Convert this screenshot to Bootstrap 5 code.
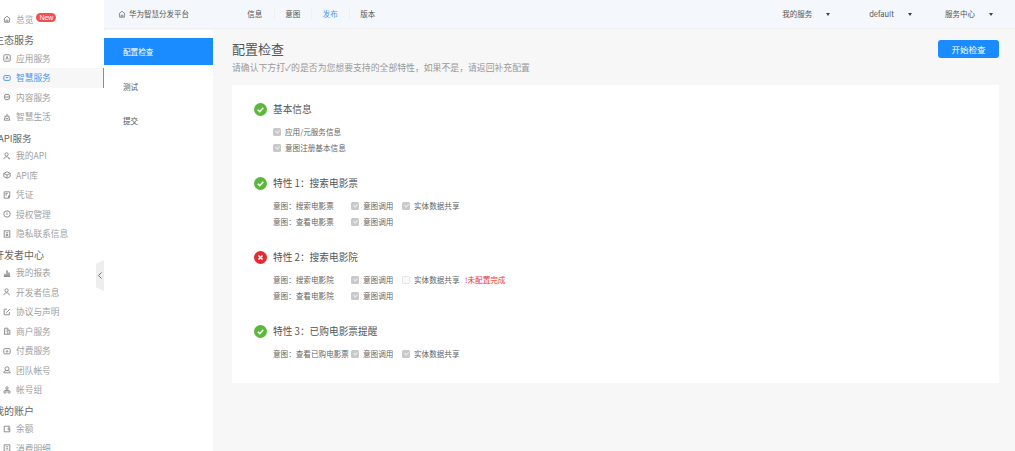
<!DOCTYPE html>
<html lang="zh">
<head>
<meta charset="utf-8">
<title>配置检查</title>
<link href="https://cdn.jsdelivr.net/npm/bootstrap@5.3.0/dist/css/bootstrap.min.css" rel="stylesheet">
<style>
html,body{height:451px;overflow:hidden;}
body{font-family:"Noto Sans CJK SC","Liberation Sans",sans-serif;background:#f7f7f7;color:#555;}
.shell{height:451px;}
.side{width:104px;height:451px;background:#fff;flex:none;padding-top:9.5px;overflow:hidden;position:relative;z-index:1;}
.side-row{height:19.5px;line-height:19.5px;font-size:8.7px;color:#a0a0a0;display:flex;align-items:center;padding-left:3px;white-space:nowrap;}
.side-row svg{width:8px;height:8px;flex:none;margin-right:5px;stroke:#8c8c8c;fill:none;stroke-width:1.2;}
.side-row.on{background:#f7f7f7;color:#4a9af0;border-right:1.5px solid #4a9af0;}
.side-row.on svg{stroke:#4a9af0;}
.side-title{height:19.5px;line-height:22px;font-size:10px;color:#666;white-space:nowrap;margin-left:-6px;}
.side-title.latin{font-size:9.5px;margin-left:-2px;}
.new-tag{background:#f0504f;color:#fff;font-size:7px;line-height:9px;padding:0 3px;border-radius:5px;margin-left:3px;margin-top:-3px;font-family:"Liberation Sans",sans-serif;}
.fold{position:absolute;left:96px;top:260px;width:8px;height:31px;background:#eeeeee;clip-path:polygon(0 12%,100% 0,100% 100%,0 88%);z-index:2;}
.fold svg{display:block;width:8px;height:31px;}
.main{min-width:0;}
.topper{height:29px;background:#f4f7fb;border-bottom:1px solid #f0f0f0;font-size:7.5px;color:#555;}
.brand{width:132px;padding-left:14px;flex:none;white-space:nowrap;}
.brand svg{width:8px;height:8px;margin-right:3px;stroke:#777;fill:none;stroke-width:1;}
.tab-link{width:37.5px;text-align:center;white-space:nowrap;}
.tab-link+.tab-link{border-left:1px solid #eef0f3;}
.tab-link.on{color:#4a9af0;}
.drop-set{padding-right:22px;}
.drop{white-space:nowrap;gap:14px;margin-left:39px;}
.drop.near{margin-left:33px;}
.caret-mark{width:0;height:0;border-left:2px solid transparent;border-right:2px solid transparent;border-top:3px solid #444;}
.steps{width:109px;flex:none;background:#fff;border-radius:3px 3px 0 0;margin:1px 0 0 0;padding-top:8px;height:421px;font-size:7.6px;color:#555;}
.step-item{height:34.5px;display:flex;align-items:center;padding-left:19px;}
.step-item.first{height:27px;margin-bottom:4px;background:#1a8cff;color:#fff;}
.panel{padding:11px 16px 0 19px;}
.page-h{font-size:13px;line-height:18px;color:#555;margin:0;font-weight:400;}
.page-sub{font-size:8.85px;line-height:12px;color:#999;margin:4px 0 0;white-space:nowrap;}
.start-btn{background:#1a8cff;color:#fff;font-size:8.5px;width:61px;height:18px;border:0;border-radius:3px;padding:0;line-height:18px;}
.check-box{background:#fff;margin-top:11px;height:298px;padding:15px 22px 0 22px;}
.feat-h{font-size:9.7px;line-height:18px;height:18px;color:#555;gap:6px;margin:0 0 6px;font-weight:400;}
.feat-h svg{width:13px;height:13px;flex:none;}
.f-list{padding-left:19px;font-size:7.6px;color:#666;}
.f-row{height:16px;white-space:nowrap;}
.f-label{width:78px;flex:none;}
.f-opt{width:51px;flex:none;gap:4px;}
.tick{width:8px;height:8px;border-radius:1.5px;background:#c9c9c9;flex:none;display:block;position:relative;}
.tick::after{content:"";position:absolute;left:2.6px;top:1.2px;width:2.8px;height:4.4px;border:solid #efefef;border-width:0 1px 1px 0;transform:rotate(45deg);}
.tick.off{background:#fafafa;border:1px solid #e4e4e4;}
.tick.off::after{display:none;}
.warn{color:#e8353b;margin-left:1px;}
.opt-wide{width:62px;}
.gap-a{height:18px;}
</style>
</head>
<body>
<div class="shell d-flex">
  <aside class="side">
    <div class="side-row"><svg viewBox="0 0 10 10"><path d="M1 5 5 1.5 9 5M2 4.5V9h6V4.5M4 9V6.5h2V9"/></svg>总览<span class="new-tag">New</span></div>
    <div class="side-title">生态服务</div>
    <div class="side-row"><svg viewBox="0 0 10 10"><rect x="1" y="1" width="8" height="8" rx="1"/><path d="M3.500 7 5 3l1.500 4"/></svg>应用服务</div>
    <div class="side-row on"><svg viewBox="0 0 10 10"><rect x="1" y="2" width="8" height="6" rx="1.500"/><path d="M3.500 4.500h3"/></svg>智慧服务</div>
    <div class="side-row"><svg viewBox="0 0 10 10"><circle cx="5" cy="5" r="3.500"/><path d="M2 5h6"/></svg>内容服务</div>
    <div class="side-row"><svg viewBox="0 0 10 10"><path d="M2 4h6M5 1v3M3 4 1.500 9h7L7 4M3.500 7h3"/></svg>智慧生活</div>
    <div class="side-title latin">API服务</div>
    <div class="side-row"><svg viewBox="0 0 10 10"><circle cx="4.500" cy="3" r="2"/><path d="M1 9c.5-2.500 2-3 3.500-3s3 .5 3.500 3M7 8h2"/></svg>我的API</div>
    <div class="side-row"><svg viewBox="0 0 10 10"><path d="M5 1 9 3v4L5 9 1 7V3z"/><path d="M1 3l4 2 4-2M5 5v4"/></svg>API库</div>
    <div class="side-row"><svg viewBox="0 0 10 10"><path d="M1.500 1h7v5H7v3H1.500zM3 3h3M3 5h2"/><circle cx="7.500" cy="7.500" r="1"/></svg>凭证</div>
    <div class="side-row"><svg viewBox="0 0 10 10"><circle cx="5" cy="5" r="4"/><path d="M5 3v3"/></svg>授权管理</div>
    <div class="side-row"><svg viewBox="0 0 10 10"><rect x="1.500" y="1" width="7" height="8"/><path d="M3.500 3.500h3M3.500 5.500h3M3.500 7h3"/></svg>隐私联系信息</div>
    <div class="side-title">开发者中心</div>
    <div class="side-row"><svg viewBox="0 0 10 10"><path d="M1 9h8M2.500 9V6M5 9V2M7.500 9V4.500" stroke-width="1.800"/></svg>我的报表</div>
    <div class="side-row"><svg viewBox="0 0 10 10"><circle cx="4.500" cy="3" r="2"/><path d="M1 9c.5-2.500 2-3 3.500-3s3 .5 3.500 3"/></svg>开发者信息</div>
    <div class="side-row"><svg viewBox="0 0 10 10"><path d="M8 5v3.500H1.500v-7H5M4 6l4.500-4.500"/></svg>协议与声明</div>
    <div class="side-row"><svg viewBox="0 0 10 10"><path d="M2 9V1.500h4V9M6 4h2.500v5M1 9h8M3.500 3.500h1M3.500 5.500h1"/></svg>商户服务</div>
    <div class="side-row"><svg viewBox="0 0 10 10"><rect x="1" y="2" width="8" height="6.500" rx="1"/><circle cx="5" cy="5.500" r="1"/></svg>付费服务</div>
    <div class="side-row"><svg viewBox="0 0 10 10"><circle cx="5" cy="3.500" r="2.500"/><path d="M1 8.500h8C9 6.500 7 5.500 5 5.500s-4 1-4 3z"/></svg>团队帐号</div>
    <div class="side-row"><svg viewBox="0 0 10 10"><circle cx="5" cy="2.500" r="1.500"/><circle cx="2.500" cy="7.500" r="1.500"/><circle cx="7.500" cy="7.500" r="1.500"/><path d="M5 4v1.500M2.500 6V5.500h5V6"/></svg>帐号组</div>
    <div class="side-title">我的账户</div>
    <div class="side-row"><svg viewBox="0 0 10 10"><path d="M8.500 2.500v-1H1.500v7h7v-5H6.500v2.500h2"/></svg>余额</div>
    <div class="side-row"><svg viewBox="0 0 10 10"><path d="M1.500 1h7v8h-7zM3.500 3.500h3M3.500 6h3"/></svg>消费明细</div>
  </aside>
  <div class="fold"><svg viewBox="0 0 8 31"><path d="M5.500 12.500 2.500 15.500l3 3" fill="none" stroke="#777" stroke-width="1"/></svg></div>
  <div class="main flex-grow-1 d-flex flex-column">
    <header class="topper d-flex align-items-center">
      <div class="brand d-flex align-items-center"><svg viewBox="0 0 10 10"><path d="M1 5 5 1.500 9 5M2 4.500V9h6V4.500M4 9V6.500h2V9"/></svg>华为智慧分发平台</div>
      <nav class="d-flex">
        <span class="tab-link">信息</span><span class="tab-link">意图</span><span class="tab-link on">发布</span><span class="tab-link">版本</span>
      </nav>
      <div class="drop-set d-flex ms-auto">
        <div class="drop d-flex align-items-center">我的服务<span class="caret-mark"></span></div>
        <div class="drop d-flex align-items-center">default<span class="caret-mark"></span></div>
        <div class="drop near d-flex align-items-center">服务中心<span class="caret-mark"></span></div>
      </div>
    </header>
    <div class="d-flex flex-grow-1">
      <div class="steps">
        <div class="step-item first">配置检查</div>
        <div class="step-item">测试</div>
        <div class="step-item">提交</div>
      </div>
      <main class="panel flex-grow-1">
        <div class="d-flex justify-content-between align-items-start">
          <div>
            <h1 class="page-h">配置检查</h1>
            <p class="page-sub">请确认下方打✓的是否为您想要支持的全部特性，如果不是，请返回补充配置</p>
          </div>
          <button class="start-btn" type="button">开始检查</button>
        </div>
        <section class="check-box">
          <div>
            <h2 class="feat-h d-flex align-items-center"><svg viewBox="0 0 14 14"><circle cx="7" cy="7" r="7" fill="#5ab93a"/><path d="M4 7.200 6.200 9.300 10 5.200" fill="none" stroke="#fff" stroke-width="1.600"/></svg>基本信息</h2>
            <div class="f-list">
              <div class="f-row d-flex align-items-center"><div class="f-opt d-flex align-items-center"><span class="tick"></span>应用/元服务信息</div></div>
              <div class="f-row d-flex align-items-center"><div class="f-opt d-flex align-items-center"><span class="tick"></span>意图注册基本信息</div></div>
            </div>
          </div>
          <div class="gap-a"></div>
          <div>
            <h2 class="feat-h d-flex align-items-center"><svg viewBox="0 0 14 14"><circle cx="7" cy="7" r="7" fill="#5ab93a"/><path d="M4 7.200 6.200 9.300 10 5.200" fill="none" stroke="#fff" stroke-width="1.600"/></svg>特性 1：搜索电影票</h2>
            <div class="f-list">
              <div class="f-row d-flex align-items-center"><span class="f-label">意图：搜索电影票</span><div class="f-opt d-flex align-items-center"><span class="tick"></span>意图调用</div><div class="f-opt opt-wide d-flex align-items-center"><span class="tick"></span>实体数据共享</div></div>
              <div class="f-row d-flex align-items-center"><span class="f-label">意图：查看电影票</span><div class="f-opt d-flex align-items-center"><span class="tick"></span>意图调用</div></div>
            </div>
          </div>
          <div class="gap-a"></div>
          <div>
            <h2 class="feat-h d-flex align-items-center"><svg viewBox="0 0 14 14"><circle cx="7" cy="7" r="7" fill="#e8292f"/><path d="M4.800 4.800 9.200 9.200M9.200 4.800 4.800 9.200" fill="none" stroke="#fff" stroke-width="1.600"/></svg>特性 2：搜索电影院</h2>
            <div class="f-list">
              <div class="f-row d-flex align-items-center"><span class="f-label">意图：搜索电影院</span><div class="f-opt d-flex align-items-center"><span class="tick"></span>意图调用</div><div class="f-opt opt-wide d-flex align-items-center"><span class="tick off"></span>实体数据共享</div><span class="warn">!未配置完成</span></div>
              <div class="f-row d-flex align-items-center"><span class="f-label">意图：查看电影院</span><div class="f-opt d-flex align-items-center"><span class="tick"></span>意图调用</div></div>
            </div>
          </div>
          <div class="gap-a"></div>
          <div>
            <h2 class="feat-h d-flex align-items-center"><svg viewBox="0 0 14 14"><circle cx="7" cy="7" r="7" fill="#5ab93a"/><path d="M4 7.200 6.200 9.300 10 5.200" fill="none" stroke="#fff" stroke-width="1.600"/></svg>特性 3：已购电影票提醒</h2>
            <div class="f-list">
              <div class="f-row d-flex align-items-center"><span class="f-label">意图：查看已购电影票</span><div class="f-opt d-flex align-items-center"><span class="tick"></span>意图调用</div><div class="f-opt opt-wide d-flex align-items-center"><span class="tick"></span>实体数据共享</div></div>
            </div>
          </div>
        </section>
      </main>
    </div>
  </div>
</div>
<script src="https://cdn.jsdelivr.net/npm/bootstrap@5.3.0/dist/js/bootstrap.bundle.min.js"></script>
</body>
</html>
